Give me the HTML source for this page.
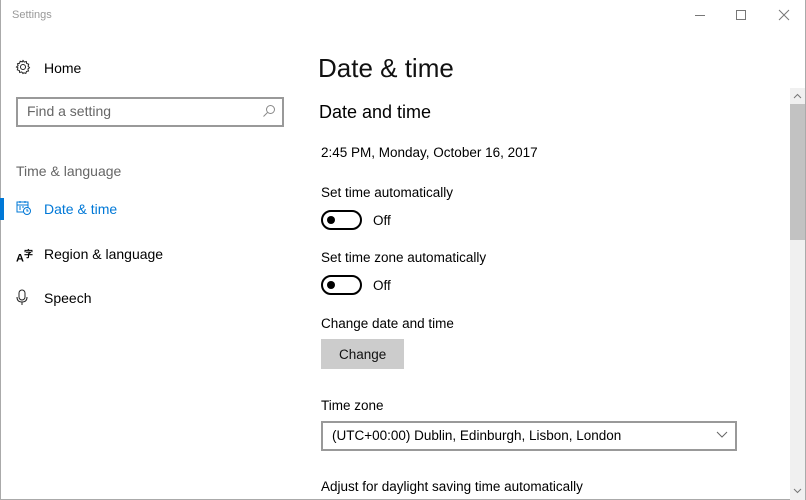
<!DOCTYPE html>
<html><head><meta charset="utf-8"><style>
*{margin:0;padding:0;box-sizing:border-box}
body{width:806px;height:500px;overflow:hidden;background:#fff;font-family:"Liberation Sans",sans-serif;color:#000;position:relative}
.a{position:absolute;white-space:nowrap}
.t{font-size:13.5px}
.tog{position:absolute;width:41px;height:20px;border:2px solid #000;border-radius:10px}
.tog:after{content:"";position:absolute;left:4px;top:4px;width:8px;height:8px;border-radius:50%;background:#000}
</style></head><body>
<div class="a" style="left:0;top:0;width:806px;height:500px;border:1px solid #aaa;border-top:none"></div>
<div class="a" style="left:12px;top:9px;font-size:11px;color:#999">Settings</div>
<div class="a" style="left:695px;top:15px;width:10px;height:1px;background:#777"></div>
<div class="a" style="left:736px;top:10px;width:10px;height:10px;border:1px solid #777"></div>
<svg class="a" style="left:778px;top:9px" width="12" height="12"><path d="M1 1L11 11M11 1L1 11" stroke="#777" stroke-width="1"/></svg>

<svg class="a" style="left:15px;top:59px" width="16" height="16" viewBox="0 0 16 16"><circle cx="8" cy="8" r="2.5" fill="none" stroke="#222"/><path d="M8 1.5l1.3 1.6 2-.6.4 2 2 .7-.6 2 1.4 1.5-1.6 1.3.6 2-2 .4-.7 2-2-.6L8 14.5l-1.3-1.6-2 .6-.4-2-2-.7.6-2L1.5 8l1.6-1.3-.6-2 2-.4.7-2 2 .6z" fill="none" stroke="#222" stroke-width="1"/></svg>
<div class="a" style="left:44px;top:60px;font-size:14px">Home</div>
<div class="a" style="left:16px;top:97px;width:268px;height:30px;border:2px solid #999"></div>
<div class="a" style="left:27px;top:103px;font-size:14px;color:#666">Find a setting</div>
<svg class="a" style="left:262px;top:104px" width="14" height="14"><circle cx="8.5" cy="5.5" r="4" fill="none" stroke="#888"/><path d="M5.5 8.5L1.5 12.5" stroke="#888"/></svg>
<div class="a" style="left:16px;top:163px;font-size:14px;color:#666">Time &amp; language</div>
<div class="a" style="left:0;top:198px;width:4px;height:22px;background:#0078d7"></div>
<svg class="a" style="left:16px;top:200px" width="16" height="16"><rect x="1" y="2" width="11" height="10" fill="none" stroke="#0078d7"/><path d="M1 5h11M4 1v2M9 1v2M3 7h2M6 7h2M3 9h2" stroke="#0078d7"/><circle cx="11" cy="11" r="3.5" fill="#fff" stroke="#0078d7"/><path d="M11 9v2h1.5" stroke="#0078d7" fill="none"/></svg>
<div class="a" style="left:44px;top:201px;font-size:14px;color:#0078d7">Date &amp; time</div>
<div class="a" style="left:16px;top:247px;font-size:11px;font-weight:bold">A<sup style="font-size:9px">字</sup></div>
<div class="a" style="left:44px;top:246px;font-size:14px">Region &amp; language</div>
<svg class="a" style="left:16px;top:289px" width="12" height="16"><rect x="3" y="1" width="6" height="10" rx="3" fill="none" stroke="#222"/><path d="M1 8q0 5 5 5t5-5M6 13v3" fill="none" stroke="#222"/></svg>
<div class="a" style="left:44px;top:290px;font-size:14px">Speech</div>

<div class="a" style="left:318px;top:53px;font-size:26px;color:#111">Date &amp; time</div>
<div class="a" style="left:319px;top:102px;font-size:18px">Date and time</div>
<div class="a t" style="left:321px;top:145px">2:45 PM, Monday, October 16, 2017</div>
<div class="a t" style="left:321px;top:185px">Set time automatically</div>
<div class="tog" style="left:321px;top:210px"></div>
<div class="a t" style="left:373px;top:213px">Off</div>
<div class="a t" style="left:321px;top:250px">Set time zone automatically</div>
<div class="tog" style="left:321px;top:275px"></div>
<div class="a t" style="left:373px;top:278px">Off</div>
<div class="a t" style="left:321px;top:316px">Change date and time</div>
<div class="a" style="left:321px;top:339px;width:83px;height:30px;background:#ccc"></div>
<div class="a t" style="left:339px;top:347px;color:#111">Change</div>
<div class="a t" style="left:321px;top:398px">Time zone</div>
<div class="a" style="left:321px;top:421px;width:416px;height:30px;border:2px solid #999"></div>
<div class="a t" style="left:332px;top:428px">(UTC+00:00) Dublin, Edinburgh, Lisbon, London</div>
<svg class="a" style="left:716px;top:431px" width="12" height="8"><path d="M1 1l5 5 5-5" fill="none" stroke="#666"/></svg>
<div class="a t" style="left:321px;top:479px">Adjust for daylight saving time automatically</div>

<div class="a" style="left:790px;top:88px;width:15px;height:412px;background:#f0f0f0"></div>
<div class="a" style="left:790px;top:104px;width:15px;height:136px;background:#c2c2c2"></div>
<svg class="a" style="left:793px;top:93px" width="9" height="6"><path d="M1 5l3.5-3.5L8 5" fill="none" stroke="#777"/></svg>
<svg class="a" style="left:793px;top:488px" width="9" height="6"><path d="M1 1l3.5 3.5L8 1" fill="none" stroke="#777"/></svg>
</body></html>
